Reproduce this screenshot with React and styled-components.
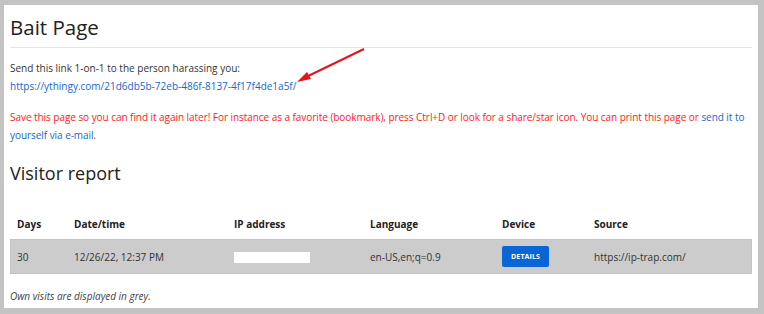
import React from "react";
import styled, { createGlobalStyle } from "styled-components";

const Global = createGlobalStyle`
  html, body { margin: 0; padding: 0; }
  body {
    background: #c3c3c3;
    font-family: "Open Sans", "Noto Sans", sans-serif;
    color: #333;
  }
`;

const Frame = styled.div`
  padding: 5px 6px 6px 4px;
  height: 314px;
  box-sizing: border-box;
`;

const Panel = styled.div`
  background: #fff;
  height: 303px;
  box-sizing: border-box;
  padding: 0 6px 0 6px;
  position: relative;
  overflow: hidden;
`;

const Title = styled.h1`
  margin: 0;
  padding: 8px 0 6px 0;
  font-size: 20.5px;
  font-weight: 400;
  line-height: 28px;
  color: #222;
  border-bottom: 1px solid #e6e6e6;
`;

const Para = styled.p`
  margin: ${(p) => p.$mt || 0}px 0 0 0;
  font-size: 10px;
  line-height: 18px;
  letter-spacing: ${(p) => (p.$red ? "-0.05px" : "0")};
  color: ${(p) => (p.$red ? "#ff1a1a" : "#333")};
`;

const Link = styled.a`
  color: #1a66cc;
  text-decoration: none;
`;

const SubTitle = styled.h2`
  margin: 17px 0 0 0;
  font-size: 18px;
  font-weight: 400;
  line-height: 24px;
  color: #222;
`;

const Table = styled.table`
  margin-top: 24px;
  width: 100%;
  table-layout: fixed;
  border-collapse: collapse;
  font-size: 10px;
`;

const Th = styled.th`
  box-sizing: border-box;
  text-align: left;
  font-weight: 700;
  padding: 0 0 0 7px;
  height: 30px;
  vertical-align: middle;
  color: #222;
  width: ${(p) => (p.$w ? `${p.$w}px` : "auto")};
`;

const Row = styled.tr`
  background: #cccccc;
  outline: 1px dotted #bdbdbd;
  outline-offset: -1px;
`;

const Td = styled.td`
  padding: 0 0 0 7px;
  height: 35px;
  box-sizing: border-box;
  vertical-align: middle;
  color: #333;
`;

const Masked = styled.span`
  display: inline-block;
  width: 76px;
  height: 11px;
  background: #fff;
  vertical-align: middle;
`;

const DetailsButton = styled.button`
  display: block;
  background: #0a66d6;
  color: #fff;
  border: none;
  border-radius: 2px;
  font-family: inherit;
  font-weight: 700;
  font-size: 7px;
  height: 21px;
  width: 47px;
  padding: 0;
  letter-spacing: 0.1px;
`;

const Note = styled.p`
  margin: 13px 0 0 0;
  font-size: 10px;
  line-height: 18px;
  font-style: italic;
  color: #444;
`;

const Arrow = styled.svg`
  position: absolute;
  left: 278px;
  top: 33px;
`;

export default function App() {
  return (
    <>
      <Global />
      <Frame>
        <Panel>
          <Title>Bait Page</Title>
          <Para $mt={11}>
            Send this link 1-on-1 to the person harassing you:
            <br />
            <Link href="#">https://ythingy.com/21d6db5b-72eb-486f-8137-4f17f4de1a5f/</Link>
          </Para>
          <Para $red $mt={13}>
            Save this page so you can find it again later! For instance as a favorite (bookmark), press Ctrl+D or look for a share/star icon. You can print this page or{" "}
            <Link href="#">send it to yourself via e-mail</Link>.
          </Para>
          <SubTitle>Visitor report</SubTitle>
          <Table>
            <thead>
              <tr>
                <Th $w={57}>Days</Th>
                <Th $w={160}>Date/time</Th>
                <Th $w={136}>IP address</Th>
                <Th $w={132}>Language</Th>
                <Th $w={92}>Device</Th>
                <Th>Source</Th>
              </tr>
            </thead>
            <tbody>
              <Row>
                <Td>30</Td>
                <Td>12/26/22, 12:37 PM</Td>
                <Td><Masked /></Td>
                <Td>en-US,en;q=0.9</Td>
                <Td><DetailsButton>DETAILS</DetailsButton></Td>
                <Td>https://ip-trap.com/</Td>
              </Row>
            </tbody>
          </Table>
          <Note>Own visits are displayed in grey.</Note>
          <Arrow width="90" height="50" viewBox="0 0 90 50">
            <line x1="82" y1="11" x2="22" y2="40" stroke="#e8141c" strokeWidth="2" />
            <polygon points="15,44 25,34 29,41" fill="#e8141c" />
          </Arrow>
        </Panel>
      </Frame>
    </>
  );
}
